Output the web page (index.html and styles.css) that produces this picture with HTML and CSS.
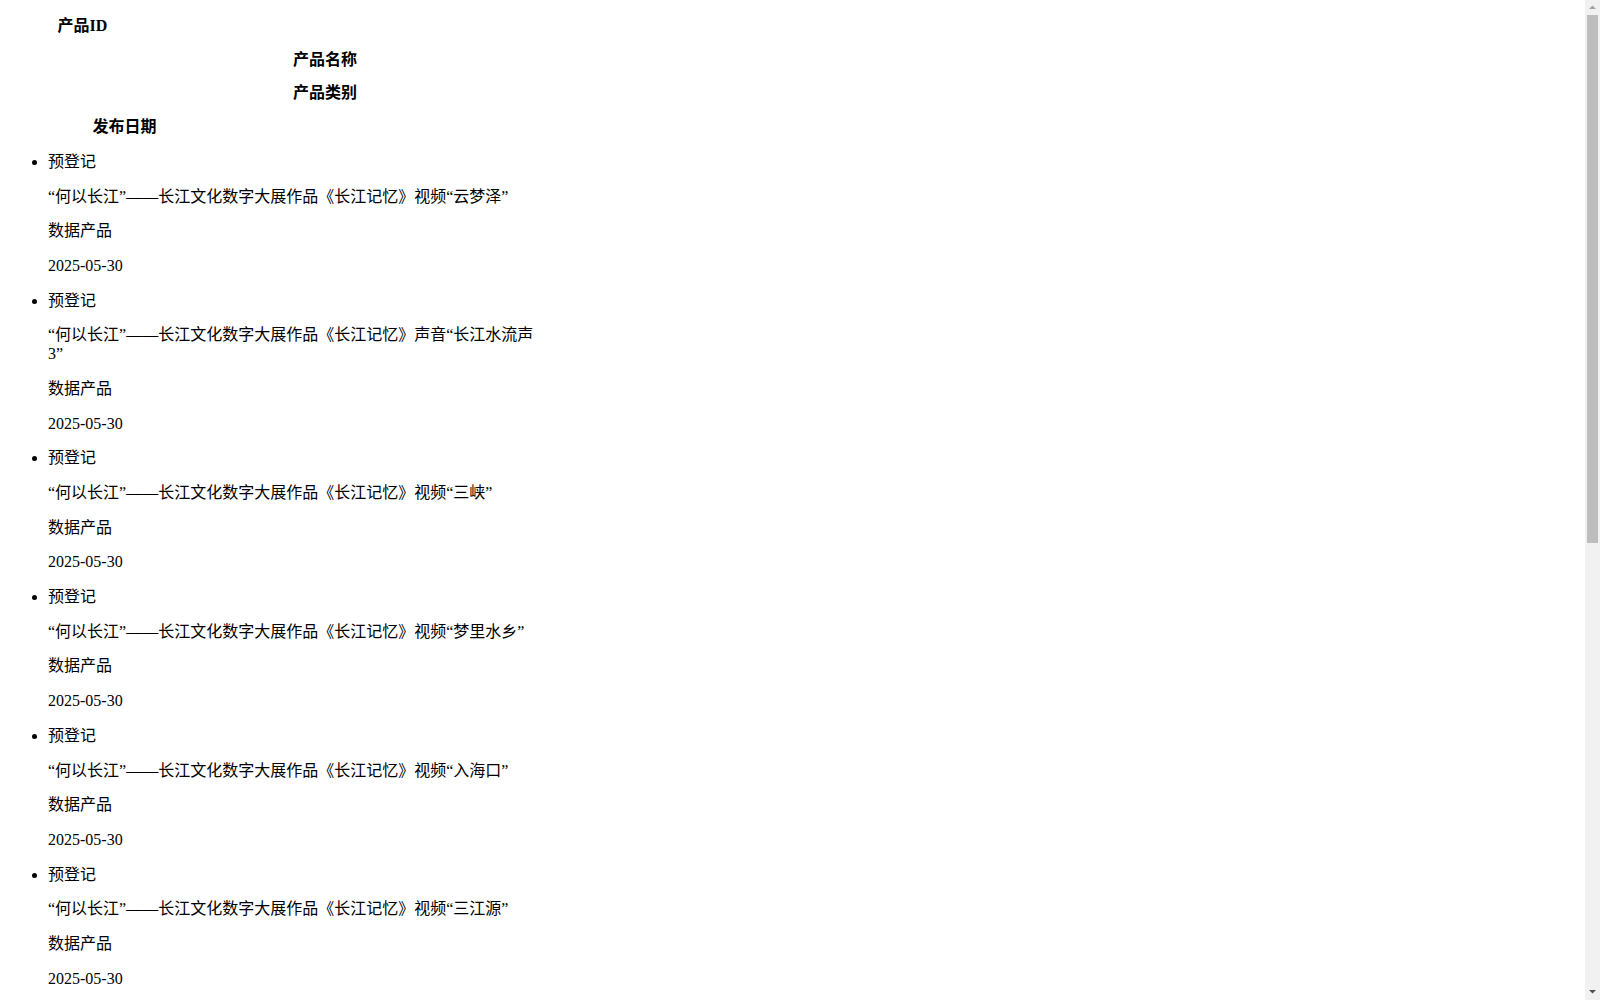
FILE: index.html
```html
<!DOCTYPE html>
<html lang="zh-CN">
<head>
<meta charset="utf-8">
<title>产品列表</title>
<link rel="stylesheet" href="styles.css">
</head>
<body>
<div class="head">
  <p class="th th-id">产品ID</p>
  <p class="th th-name">产品名称</p>
  <p class="th th-name">产品类别</p>
  <p class="th th-date">发布日期</p>
</div>
<ul class="list">
  <li class="item"><p>预登记</p><p>“何以长江”——长江文化数字大展作品《长江记忆》视频“云梦泽”</p><p>数据产品</p><p>2025-05-30</p></li>
  <li class="item"><p>预登记</p><p>“何以长江”——长江文化数字大展作品《长江记忆》声音“长江水流声3”</p><p>数据产品</p><p>2025-05-30</p></li>
  <li class="item"><p>预登记</p><p>“何以长江”——长江文化数字大展作品《长江记忆》视频“三峡”</p><p>数据产品</p><p>2025-05-30</p></li>
  <li class="item"><p>预登记</p><p>“何以长江”——长江文化数字大展作品《长江记忆》视频“梦里水乡”</p><p>数据产品</p><p>2025-05-30</p></li>
  <li class="item"><p>预登记</p><p>“何以长江”——长江文化数字大展作品《长江记忆》视频“入海口”</p><p>数据产品</p><p>2025-05-30</p></li>
  <li class="item"><p>预登记</p><p>“何以长江”——长江文化数字大展作品《长江记忆》视频“三江源”</p><p>数据产品</p><p>2025-05-30</p></li>
  <li class="item"><p>预登记</p><p>“何以长江”——长江文化数字大展作品《长江记忆》视频“江城”</p><p>数据产品</p><p>2025-05-30</p></li>
  <li class="item"><p>预登记</p><p>“何以长江”——长江文化数字大展作品《长江记忆》声音“长江水流声2”</p><p>数据产品</p><p>2025-05-30</p></li>
  <li class="item"><p>预登记</p><p>“何以长江”——长江文化数字大展作品《长江记忆》声音“长江水流声1”</p><p>数据产品</p><p>2025-05-30</p></li>
  <li class="item"><p>预登记</p><p>“何以长江”——长江文化数字大展作品《长江记忆》视频“洞庭”</p><p>数据产品</p><p>2025-05-30</p></li>
  <li class="item"><p>预登记</p><p>“何以长江”——长江文化数字大展作品《长江记忆》视频“鄱阳”</p><p>数据产品</p><p>2025-05-30</p></li>
  <li class="item"><p>预登记</p><p>“何以长江”——长江文化数字大展作品《长江记忆》视频“金沙”</p><p>数据产品</p><p>2025-05-30</p></li>
</ul>
<div class="scrollbar" aria-hidden="true">
  <div class="sb-btn">
    <svg width="15" height="15" viewBox="0 0 15 15"><polygon points="4,9 11,9 7.5,5.5" fill="#a3a3a3"/></svg>
  </div>
  <div class="sb-track"><div class="sb-thumb"></div></div>
  <div class="sb-btn">
    <svg width="15" height="15" viewBox="0 0 15 15"><polygon points="4,5 11,5 7.5,8.5" fill="#505050"/></svg>
  </div>
</div>
</body>
</html>
```
FILE: styles.css
```css
html, body {
  font-family: "Liberation Serif", "Noto Sans CJK SC", serif;
  font-size: 16px;
  color: #000;
  background: #fff;
}
body {
  margin: 8px;
}
.head {
  display: block;
  margin-top: -7px;
}
.th {
  font-weight: bold;
  text-align: center;
  line-height: 17.6px;
  margin: 16px 0;
}
.th-id { width: 149px; }
.th-name { width: 634px; }
.th-date { width: 233px; }
.list {
  margin: 17.5px 0 16px;
  padding-left: 40px;
  list-style: disc;
}
.item p {
  width: 500px;
  line-height: 18.7px;
  margin: 16px 0;
}
.scrollbar {
  position: fixed;
  top: 0;
  right: 0;
  width: 15px;
  height: 100vh;
  background: #f1f1f1;
  display: flex;
  flex-direction: column;
}
.sb-btn {
  height: 15px;
  flex: 0 0 15px;
}
.sb-btn svg {
  display: block;
}
.sb-track {
  flex: 1;
  padding: 0 2px;
}
.sb-thumb {
  height: 528px;
  background: #bdbdbd;
}
```
